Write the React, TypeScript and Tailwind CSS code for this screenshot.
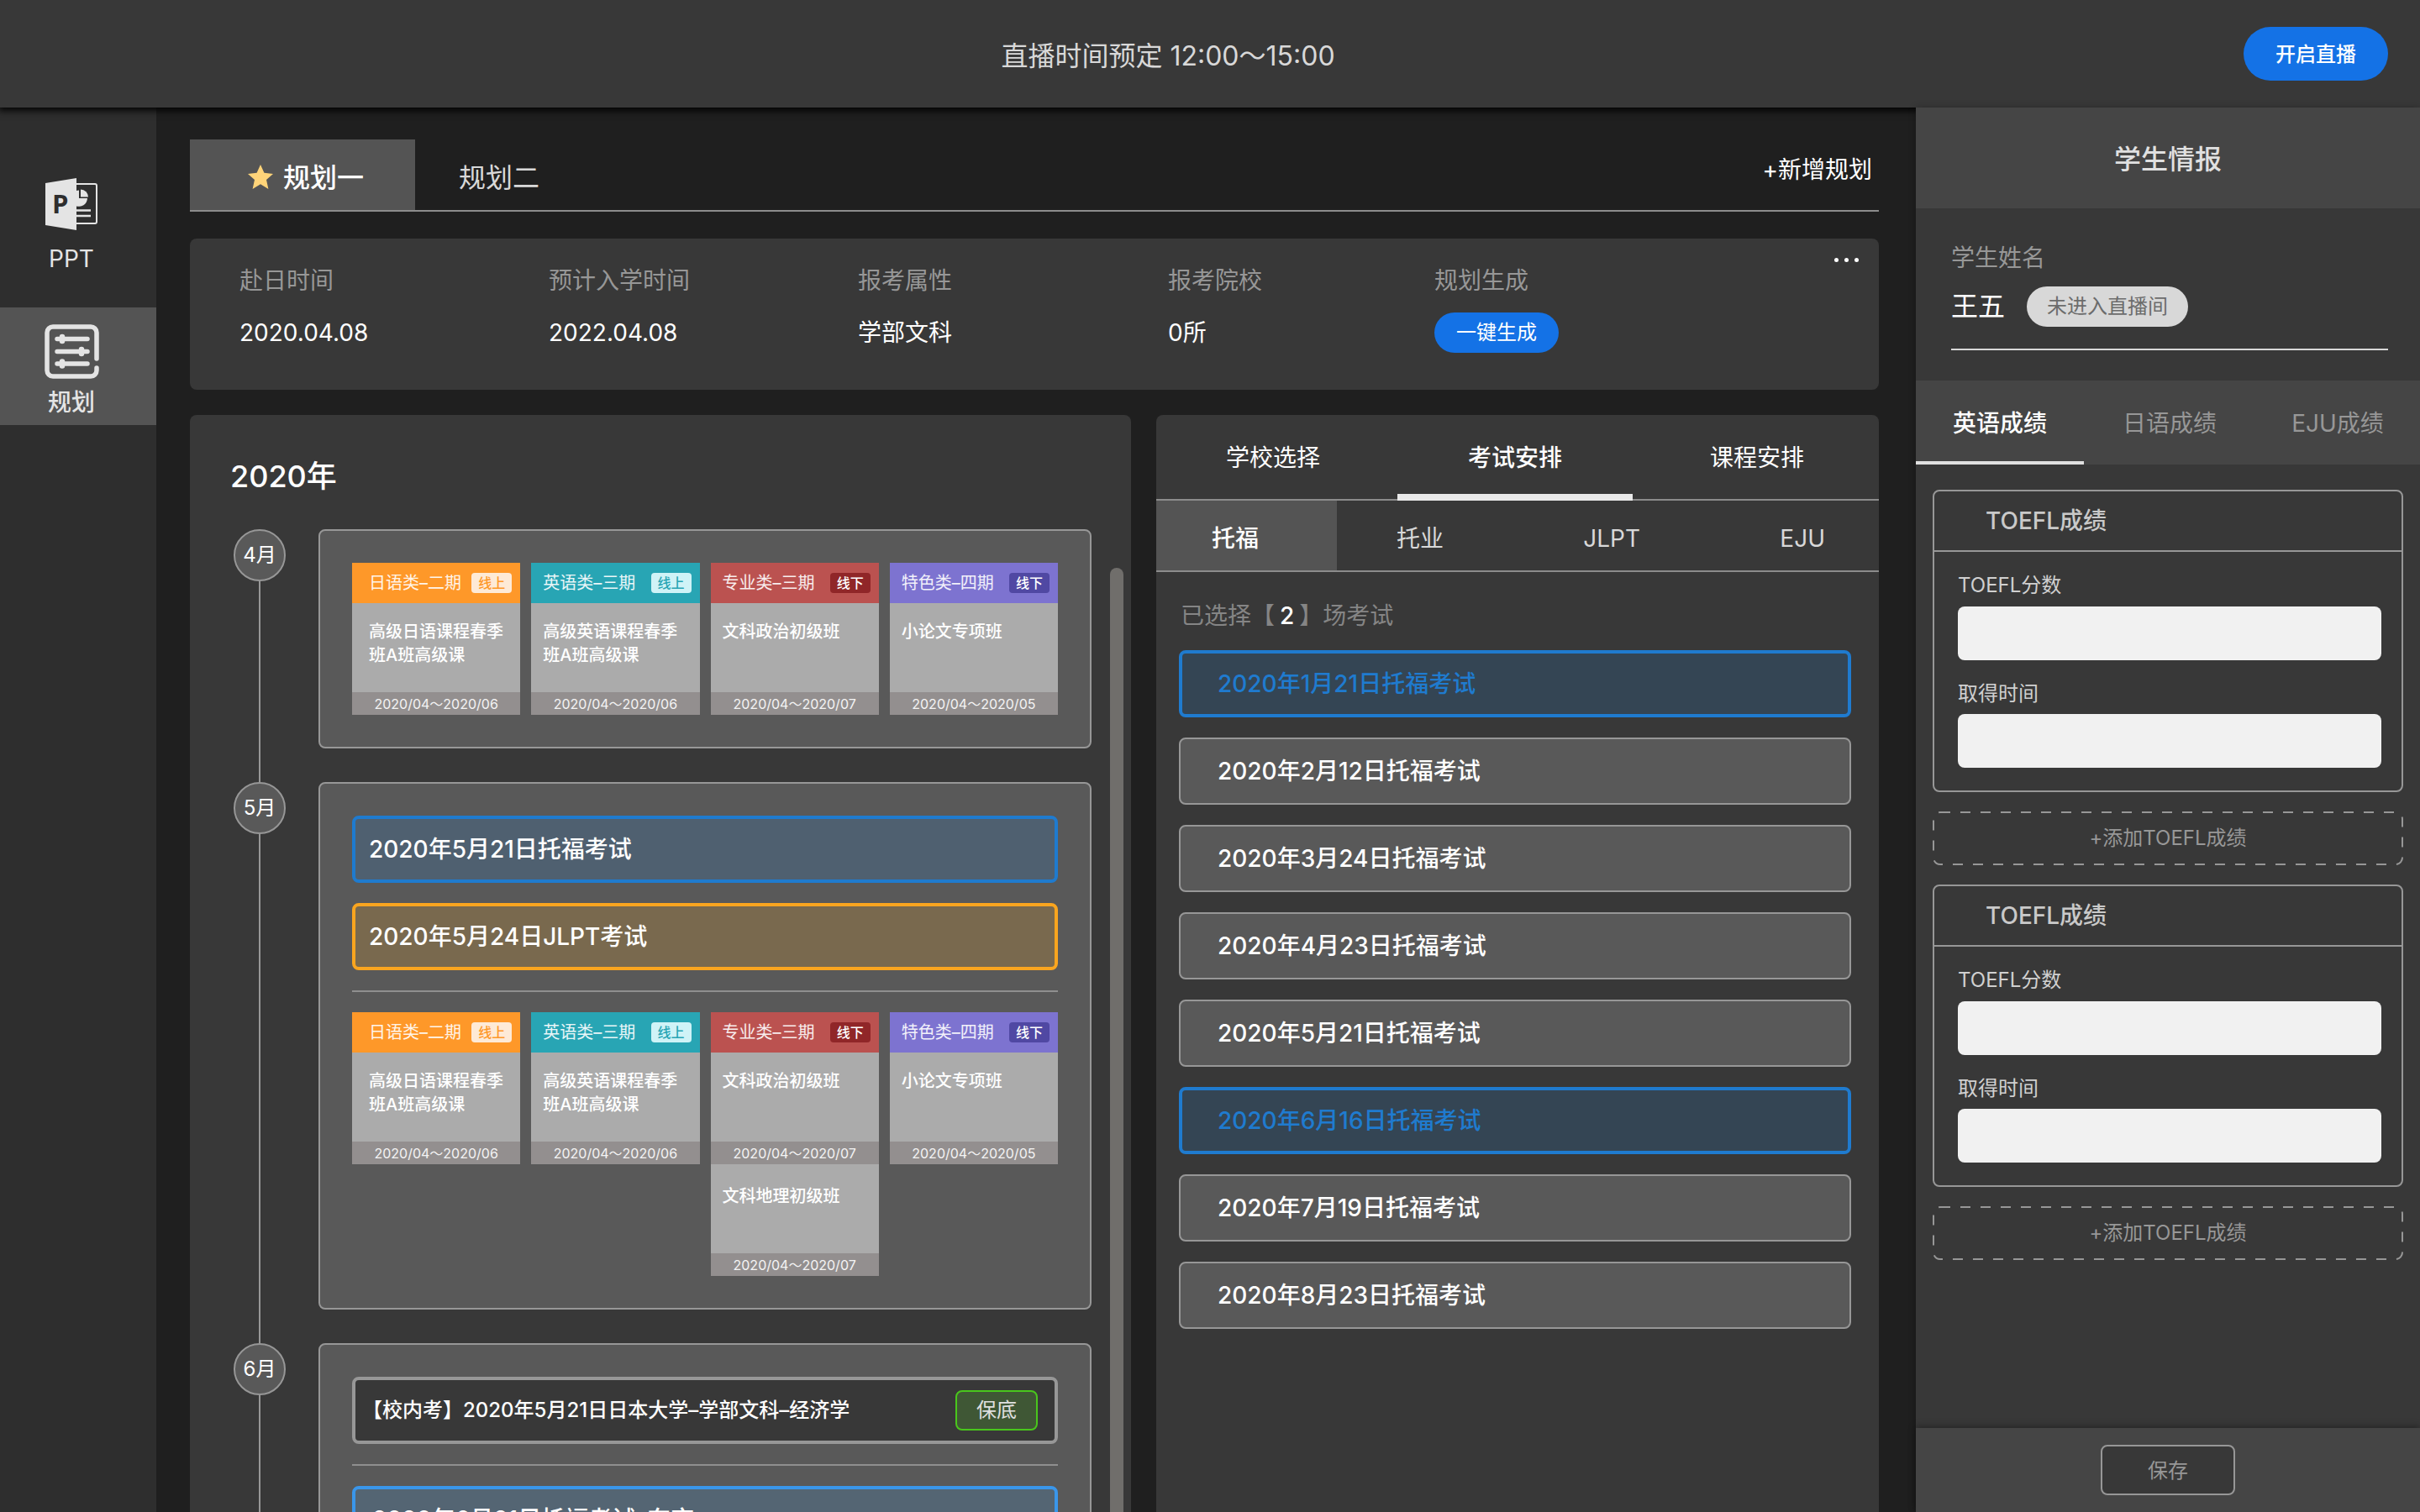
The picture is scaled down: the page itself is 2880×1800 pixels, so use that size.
import { useId } from "react";

type Course = { name: string; dates: string };
type CourseGroup = { title: string; mode: string; tone: Tone; courses: Course[] };
type Tone = "orange" | "teal" | "red" | "purple";

const tones: Record<Tone, { head: string; badge: string; inset: string }> = {
  orange: { head: "bg-[#fe9829]", badge: "bg-[#feead6] text-[#fe9829]", inset: "pl-5" },
  teal: { head: "bg-[#28a5b4]", badge: "bg-[#cff3f7] text-[#28a5b4]", inset: "pl-3.5" },
  red: { head: "bg-[#bb5250]", badge: "bg-[#902628] text-white", inset: "pl-3.5" },
  purple: { head: "bg-[#7d73d0]", badge: "bg-[#5048a3] text-white", inset: "pl-3.5" },
};

const japanese: CourseGroup = {
  title: "日语类–二期",
  mode: "线上",
  tone: "orange",
  courses: [{ name: "高级日语课程春季班A班高级课", dates: "2020/04～2020/06" }],
};
const english: CourseGroup = {
  title: "英语类–三期",
  mode: "线上",
  tone: "teal",
  courses: [{ name: "高级英语课程春季班A班高级课", dates: "2020/04～2020/06" }],
};
const politics: Course = { name: "文科政治初级班", dates: "2020/04～2020/07" };
const geography: Course = { name: "文科地理初级班", dates: "2020/04～2020/07" };
const major: CourseGroup = { title: "专业类–三期", mode: "线下", tone: "red", courses: [politics] };
const special: CourseGroup = {
  title: "特色类–四期",
  mode: "线下",
  tone: "purple",
  courses: [{ name: "小论文专项班", dates: "2020/04～2020/05" }],
};

const exams = [
  { label: "2020年1月21日托福考试", selected: true },
  { label: "2020年2月12日托福考试", selected: false },
  { label: "2020年3月24日托福考试", selected: false },
  { label: "2020年4月23日托福考试", selected: false },
  { label: "2020年5月21日托福考试", selected: false },
  { label: "2020年6月16日托福考试", selected: true },
  { label: "2020年7月19日托福考试", selected: false },
  { label: "2020年8月23日托福考试", selected: false },
];

function PptIcon() {
  return (
    <svg viewBox="0 0 62 62" className="size-[62px]" aria-hidden="true">
      <path d="M36 7H59a2 2 0 0 1 2 2V52a2 2 0 0 1-2 2H36" fill="none" stroke="#e4e4e4" strokeWidth="2" />
      <path d="M36 15.500a9.500 9.500 0 0 1 4-1V24H50a10 10 0 0 1-14 9z" fill="#e4e4e4" />
      <path d="M42 13.500a9 9 0 0 1 9 9h-9z" fill="#e4e4e4" />
      <path d="M36 38.500H54M36 45H54" stroke="#e4e4e4" strokeWidth="2.500" />
      <path d="M0 6 37 0V62L0 56z" fill="#e4e4e4" />
      <text x="8" y="42" fontSize="31" fontWeight="700" fill="#2e2e2e" fontFamily="'Open Sans', sans-serif">
        P
      </text>
    </svg>
  );
}

function PlanIcon() {
  return (
    <svg
      viewBox="0 0 65 65"
      className="size-[65px]"
      fill="none"
      stroke="#e4e4e4"
      strokeLinecap="round"
      aria-hidden="true"
    >
      <path
        d="M62 41V10a7 7 0 0 0-7-7H10a7 7 0 0 0-7 7V55a7 7 0 0 0 7 7H55a7 7 0 0 0 7-7V52"
        strokeWidth="5.500"
      />
      <path d="M15 17.500H51M15 32.500H51M15 47H51" strokeWidth="5.500" />
      <path d="M21 15v5M44 30v5M21 44.500v5" strokeWidth="6.500" />
    </svg>
  );
}

function Header() {
  return (
    <header className="relative z-10 flex h-32 shrink-0 items-center bg-[#383838] pr-[38px] pl-[110px] shadow-[0_2px_8px_2px_rgba(0,0,0,0.9)]">
      <h1 className="flex-1 pt-1.5 text-center text-[32px] leading-12 text-[#d8d8d8]">直播时间预定 12:00～15:00</h1>
      <button className="h-16 w-[172px] rounded-full bg-[#1472e6] pt-0.5 text-2xl font-medium text-white">
        开启直播
      </button>
    </header>
  );
}

function Sidebar() {
  return (
    <nav className="w-[186px] shrink-0 bg-[#2e2e2e] pt-[68px] text-[28px] leading-10 text-[#e4e4e4]">
      <button className="flex h-[170px] w-full flex-col items-center pt-4 pr-4">
        <PptIcon />
        <span className="mt-3.5">PPT</span>
      </button>
      <button className="flex h-[140px] w-full flex-col items-center bg-[#545454] pt-5 pr-4 font-medium">
        <PlanIcon />
        <span className="mt-2">规划</span>
      </button>
    </nav>
  );
}

function PlanTabs() {
  return (
    <div className="flex border-b-2 border-[#8c8c8c]">
      <button className="flex h-[84px] w-[268px] items-center justify-center gap-3 bg-[#545454] pt-2 pl-2 text-[32px] leading-12 font-medium text-white">
        <svg viewBox="0 0 30 29" className="mb-1 h-[29px] w-[30px]" aria-hidden="true">
          <path d="M15 0l4.400 9.800L30 11l-8 7 2.400 11L15 23.200 5.600 29 8 18 0 11l10.600-1.200z" fill="#ffd479" />
        </svg>
        规划一
      </button>
      <button className="pt-2 pl-[52px] text-[32px] leading-12 text-[#d8d8d8]">规划二</button>
      <button className="mr-2 mb-3 ml-auto text-[28px] leading-10 text-white">+新增规划</button>
    </div>
  );
}

function PlanSummary() {
  const items = [
    { label: "赴日时间", value: "2020.04.08" },
    { label: "预计入学时间", value: "2022.04.08" },
    { label: "报考属性", value: "学部文科" },
    { label: "报考院校", value: "0所" },
  ];
  return (
    <section className="relative mt-8 rounded-lg bg-[#383838] pt-[30px] pb-11 pl-[59px]">
      <dl className="grid grid-cols-[368fr_368fr_369fr_317fr_529fr] text-[28px]">
        {items.map((item) => (
          <div key={item.label}>
            <dt className="leading-10 text-[#979797]">{item.label}</dt>
            <dd className="mt-[18px] leading-12 text-white">{item.value}</dd>
          </div>
        ))}
        <div>
          <dt className="leading-10 text-[#979797]">规划生成</dt>
          <dd className="mt-[18px]">
            <button className="block h-12 w-[148px] rounded-full bg-[#1472e6] text-2xl text-white">一键生成</button>
          </dd>
        </div>
      </dl>
      <button aria-label="更多" className="absolute top-[19px] right-6 flex gap-[7px] py-1">
        <span className="size-[5px] rounded-full bg-white" />
        <span className="size-[5px] rounded-full bg-white" />
        <span className="size-[5px] rounded-full bg-white" />
      </button>
    </section>
  );
}

function CourseColumn({ group }: { group: CourseGroup }) {
  const tone = tones[group.tone];
  return (
    <article className="text-xl text-white">
      <h3 className={`flex h-12 items-center justify-between pr-2.5 ${tone.inset} ${tone.head}`}>
        <span className="text-white/90">{group.title}</span>
        <span className={`h-6 w-12 rounded text-center text-base leading-6 font-medium ${tone.badge}`}>
          {group.mode}
        </span>
      </h3>
      {group.courses.map((course, index) => (
        <div key={course.name}>
          <p
            className={`h-[106px] bg-[#ababab] pr-3 leading-7 font-medium ${index > 0 ? "pt-6" : "pt-5"} ${tone.inset}`}
          >
            {course.name}
          </p>
          <p className="h-[27px] bg-[#938f8f] text-center text-base leading-7 text-white/90">{course.dates}</p>
        </div>
      ))}
    </article>
  );
}

function CourseGrid({ groups }: { groups: CourseGroup[] }) {
  return (
    <div className="grid grid-cols-4 items-start gap-[13px]">
      {groups.map((group) => (
        <CourseColumn key={group.title} group={group} />
      ))}
    </div>
  );
}

function Month({ label, children }: { label: string; children: React.ReactNode }) {
  return (
    <li className="flex">
      <div className="flex w-[62px] shrink-0 flex-col items-center">
        <div className="flex size-[62px] shrink-0 items-center justify-center rounded-full border-2 border-[#979797] bg-[#595959] text-2xl text-white">
          {label}
        </div>
        <div className="w-0.5 flex-1 bg-[#979797]" />
      </div>
      <div className="flex-1 pb-10 pl-[39px]">
        <div className="rounded-lg border-2 border-[#979797] bg-[#595959] p-[38px]">{children}</div>
      </div>
    </li>
  );
}

function Divider() {
  return <hr className="my-6 border-t-2 border-[#8f8f8f]" />;
}

function Timeline() {
  return (
    <section className="relative min-w-0 overflow-hidden rounded-t-lg bg-[#383838] pt-[49px] pr-[47px] pl-12">
      <h2 className="text-4xl leading-12 font-medium text-white">2020年</h2>
      <ol className="mt-[39px] pl-1">
        <Month label="4月">
          <CourseGrid groups={[japanese, english, major, special]} />
        </Month>
        <Month label="5月">
          <div className="flex h-20 items-center rounded-lg border-4 border-[#1f7bcf] bg-[#4f6070] px-4 text-[28px] font-medium text-white">
            2020年5月21日托福考试
          </div>
          <div className="mt-6 flex h-20 items-center rounded-lg border-4 border-[#faa51f] bg-[#79694e] px-4 text-[28px] font-medium text-white">
            2020年5月24日JLPT考试
          </div>
          <Divider />
          <CourseGrid groups={[japanese, english, { ...major, courses: [politics, geography] }, special]} />
        </Month>
        <Month label="6月">
          <div className="flex h-20 items-center justify-between rounded-lg border-4 border-[#979797] bg-[#383838] pr-5 pl-2 text-2xl text-white">
            <span className="font-medium">【校内考】2020年5月21日日本大学–学部文科–经济学</span>
            <span className="flex h-12 w-[98px] items-center justify-center rounded-lg border-2 border-[#49c61c] bg-[#3f5735] text-[#e0e0e0]">
              保底
            </span>
          </div>
          <Divider />
          <div className="flex h-20 items-center rounded-lg border-4 border-[#3a96ea] bg-[#546573] px-5 text-[28px] font-medium text-white">
            2020年6月21日托福考试–东京
          </div>
        </Month>
      </ol>
      <div className="absolute top-[182px] right-[9px] bottom-0 w-4 rounded-t-full bg-[#706e6b]" />
    </section>
  );
}

function ExamPanel() {
  return (
    <section className="min-w-0 rounded-t-lg bg-[#383838] text-[28px]">
      <div className="flex h-[102px] items-center justify-between border-b-2 border-[#8c8c8c] pr-[89px] pl-[83px] leading-10 text-white">
        <button className="self-stretch pt-0.5">学校选择</button>
        <button className="relative self-stretch pt-0.5 font-medium">
          考试安排
          <span className="absolute -bottom-0.5 left-1/2 h-2 w-[280px] -translate-x-1/2 bg-[#e9e9e9]" />
        </button>
        <button className="self-stretch pt-0.5">课程安排</button>
      </div>
      <div className="flex h-[85px] border-b-2 border-[#8c8c8c] leading-10 text-[#d8d8d8]">
        <button className="w-1/4 bg-[#545454] pt-1.5 pl-[66px] text-left font-medium text-white">托福</button>
        <div className="flex flex-1 justify-between pr-16 pl-[71px]">
          <button className="pt-1.5">托业</button>
          <button className="pt-1.5">JLPT</button>
          <button className="pt-1.5">EJU</button>
        </div>
      </div>
      <div className="pt-8 pr-[33px] pl-[27px]">
        <p className="pl-0.5 leading-10 text-[#858585]">
          已选择【<span className="px-1.5 font-medium text-white">2</span>】场考试
        </p>
        <ul className="mt-[21px] flex flex-col gap-6">
          {exams.map((exam) => (
            <li key={exam.label}>
              <button
                aria-pressed={exam.selected}
                className={
                  exam.selected
                    ? "block h-20 w-full rounded-lg border-4 border-[#1f7bcf] bg-[#344554] px-[42px] text-left font-medium text-[#1f7bcf]"
                    : "block h-20 w-full rounded-lg border-2 border-[#979797] bg-[#595959] px-11 text-left font-medium text-white"
                }
              >
                {exam.label}
              </button>
            </li>
          ))}
        </ul>
      </div>
    </section>
  );
}

function ScoreCard() {
  const id = useId();
  return (
    <>
      <fieldset className="rounded-lg border-2 border-[#979797]">
        <h3 className="border-b-2 border-[#979797] py-[15px] pl-[61px] text-[28px] leading-10 font-medium text-[#c9c9c9]">
          TOEFL成绩
        </h3>
        <div className="pt-6 pr-6 pb-[27px] pl-7 text-2xl leading-8 text-[#d0d0d0]">
          <label htmlFor={`${id}-score`} className="block">
            TOEFL分数
          </label>
          <input id={`${id}-score`} className="mt-[9px] block h-16 w-full rounded-lg bg-[#f1f1f1] px-4 text-[#383838]" />
          <label htmlFor={`${id}-date`} className="mt-6 block">
            取得时间
          </label>
          <input id={`${id}-date`} className="mt-2 block h-16 w-full rounded-lg bg-[#f1f1f1] px-4 text-[#383838]" />
        </div>
      </fieldset>
      <button className="relative h-16 w-full shrink-0 text-2xl text-[#979797]">
        <svg
          className="absolute inset-px h-[calc(100%-2px)] w-[calc(100%-2px)] overflow-visible"
          aria-hidden="true"
        >
          <rect
            width="100%"
            height="100%"
            rx="8"
            fill="none"
            stroke="#979797"
            strokeWidth="2"
            strokeDasharray="12 12"
          />
        </svg>
        +添加TOEFL成绩
      </button>
    </>
  );
}

function StudentPanel() {
  return (
    <aside className="relative z-20 flex w-[600px] shrink-0 flex-col bg-[#383838] shadow-[0_0_8px_rgba(0,0,0,0.25)]">
      <h2 className="bg-[#454545] pt-[38px] pb-[34px] text-center text-[32px] leading-12 font-medium text-[#e0e0e0]">
        学生情报
      </h2>
      <div className="pt-[39px] pr-[38px] pb-9 pl-[42px]">
        <div className="border-b-2 border-[#d8d8d8] pb-[26px]">
          <p className="text-[28px] leading-10 text-[#979797]">学生姓名</p>
          <div className="mt-3.5 flex items-center gap-[26px]">
            <span className="text-[32px] leading-12 text-white">王五</span>
            <span className="h-12 rounded-full bg-[#d8d8d8] px-6 text-2xl leading-12 text-[#6c6c6c]">
              未进入直播间
            </span>
          </div>
        </div>
      </div>
      <div className="grid h-[100px] shrink-0 grid-cols-3 bg-[#454545] text-[28px] leading-10 text-[#979797]">
        <button className="border-b-4 border-[#e0e0e0] pt-1.5 font-medium text-white">英语成绩</button>
        <button className="pt-0.5 pl-1">日语成绩</button>
        <button className="pt-0.5 pl-1">EJU成绩</button>
      </div>
      <div className="flex min-h-0 flex-1 flex-col gap-[23px] overflow-hidden px-5 pt-[30px]">
        <ScoreCard />
        <ScoreCard />
      </div>
      <div className="flex h-[100px] shrink-0 items-center justify-center bg-[#454545] shadow-[0_-2px_8px_rgba(0,0,0,0.35)]">
        <button className="h-[60px] w-40 rounded-lg border-2 border-[#979797] bg-[#383838] pt-0.5 text-2xl text-[#979797]">
          保存
        </button>
      </div>
    </aside>
  );
}

export default function App() {
  return (
    <div className="flex h-screen flex-col overflow-hidden bg-[#1f1f1f] font-[Inter,'Noto_Sans_CJK_SC',sans-serif]">
      <Header />
      <div className="flex min-h-0 flex-1">
        <Sidebar />
        <main className="flex min-w-0 flex-1 flex-col pt-[38px] pr-11 pl-10">
          <PlanTabs />
          <PlanSummary />
          <div className="mt-[30px] grid min-h-0 flex-1 grid-cols-[1120fr_860fr] grid-rows-[minmax(0,1fr)] gap-[30px]">
            <Timeline />
            <ExamPanel />
          </div>
        </main>
        <StudentPanel />
      </div>
    </div>
  );
}
